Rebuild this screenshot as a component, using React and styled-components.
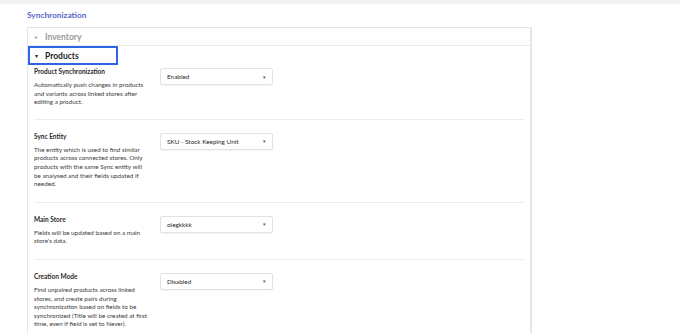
import React from "react";
import styled, { createGlobalStyle } from "styled-components";

const GlobalStyle = createGlobalStyle`
    body {
        margin: 0;
        background: #ffffff;
        font-family: Lato, "Open Sans", sans-serif;
        color: #2b2b2b;
    }
`;

const settings = [
    {
        label: "Product Synchronization",
        value: "Enabled",
        desc: "Automatically push changes in products and variants across linked stores after editing a product.",
    },
    {
        label: "Sync Entity",
        value: "SKU - Stock Keeping Unit",
        desc: "The entity which is used to find similar products across connected stores. Only products with the same Sync entity will be analysed and their fields updated if needed.",
    },
    {
        label: "Main Store",
        value: "olegkkkk",
        desc: "Fields will be updated based on a main store's data.",
    },
    {
        label: "Creation Mode",
        value: "Disabled",
        desc: "Find unpaired products across linked stores, and create pairs during synchronization based on fields to be synchronized (Title will be created at first time, even if field is set to Never).",
    },
];

const App = () => {
    return (
        <>
            <GlobalStyle />
            <TopBar />
            <Page>
                <Title>Synchronization</Title>
                <Card>
                    <Header>
                        <Caret>▸</Caret>
                        <HeaderText $muted>Inventory</HeaderText>
                    </Header>
                    <ActiveHeader>
                        <Caret $dark>▾</Caret>
                        <HeaderText>Products</HeaderText>
                    </ActiveHeader>
                    {settings.map((s, i) => (
                        <Row key={s.label} $first={i === 0} $last={i === settings.length - 1}>
                            <Info>
                                <Label>{s.label}</Label>
                                <Desc>{s.desc}</Desc>
                            </Info>
                            <Select>
                                <span>{s.value}</span>
                                <SelectCaret>▾</SelectCaret>
                            </Select>
                        </Row>
                    ))}
                </Card>
            </Page>
        </>
    );
};

const TopBar = styled.div`
    height: 4px;
    background: #f1f2f4;
`;

const Page = styled.div`
    padding: 5px 0 0 27px;
    height: 324px;
    overflow: hidden;
`;

const Title = styled.div`
    font-size: 8.3px;
    font-weight: 700;
    color: #5666c8;
    line-height: 12px;
    margin-bottom: 6px;
`;

const Card = styled.div`
    width: 502px;
    border: 1px solid #e4e4e4;
    border-right: 2px solid #e6e6e6;
    border-bottom: none;
    background: #fff;
    min-height: 320px;
`;

const Header = styled.div`
    height: 17px;
    display: flex;
    align-items: center;
    padding-left: 7px;
    border-bottom: 1px solid #ececec;
`;

const ActiveHeader = styled.div`
    height: 15px;
    width: 79px;
    display: flex;
    align-items: center;
    padding-left: 7px;
    border: 2px solid #2f64e4;
`;

const Caret = styled.span`
    font-size: 6px;
    color: ${(p) => (p.$dark ? "#222" : "#aaa")};
    width: 10px;
    margin-left: ${(p) => (p.$dark ? "-2px" : "0")};
`;

const HeaderText = styled.span`
    font-size: 8.5px;
    font-weight: 700;
    color: ${(p) => (p.$muted ? "#9a9a9a" : "#1e1e1e")};
`;

const Row = styled.div`
    display: flex;
    margin: 0 6px;
    padding: ${(p) => (p.$first ? "2px 0 12px" : "12px 0 13px")};
    border-bottom: ${(p) => (p.$last ? "none" : "1.5px solid #ededed")};
`;

const Info = styled.div`
    width: 126px;
    flex-shrink: 0;
`;

const Label = styled.div`
    font-size: 6.5px;
    font-weight: 700;
    color: #2a2a2a;
    line-height: 9px;
    margin-bottom: 5px;
`;

const Desc = styled.div`
    width: 115px;
    font-size: 6.3px;
    line-height: 8.6px;
    color: #3c3c3c;
`;

const Select = styled.div`
    box-sizing: border-box;
    width: 113px;
    height: 17px;
    margin-top: 1px;
    padding: 0 6px;
    border: 1px solid #e2e2e2;
    border-radius: 2px;
    box-shadow: 0 1px 1px rgba(0, 0, 0, 0.04);
    display: flex;
    align-items: center;
    justify-content: space-between;
    font-size: 6.4px;
    color: #2a2a2a;
`;

const SelectCaret = styled.span`
    font-size: 5px;
    color: #555;
`;

export default App;
